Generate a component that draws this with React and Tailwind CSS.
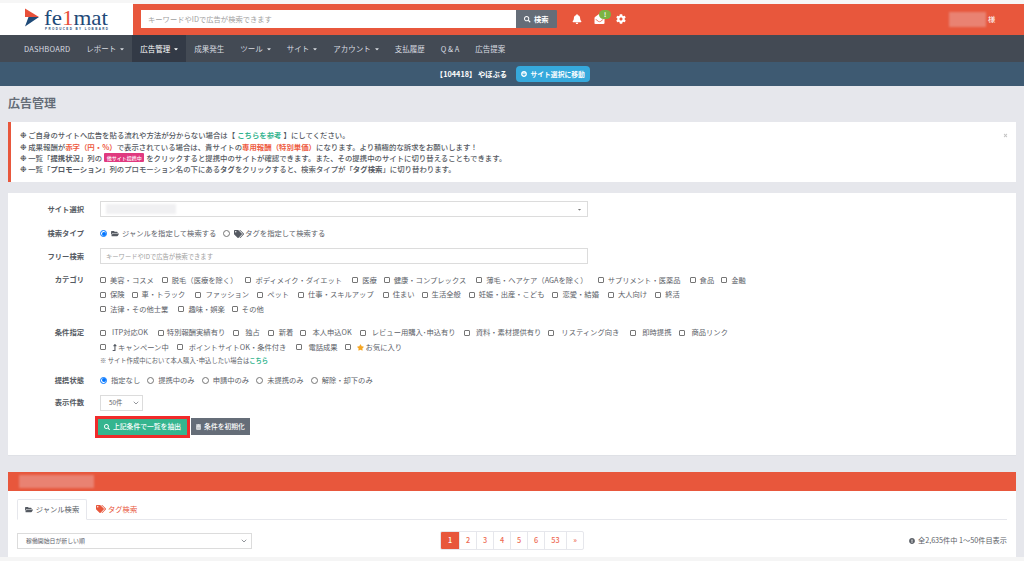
import { FaBell, FaEnvelopeOpen, FaCog, FaSearch, FaFolderOpen, FaTags, FaTrashAlt, FaStar, FaExclamationCircle, FaArrowCircleDown, FaCaretDown, FaTimes, FaLevelUpAlt } from "react-icons/fa";
import { LuChevronDown } from "react-icons/lu";

const JP = "font-['Noto_Sans_CJK_JP','Noto_Sans',sans-serif]";

const navItems = [
  { label: "DASHBOARD" },
  { label: "レポート", caret: true },
  { label: "広告管理", caret: true, active: true },
  { label: "成果発生" },
  { label: "ツール", caret: true },
  { label: "サイト", caret: true },
  { label: "アカウント", caret: true },
  { label: "支払履歴" },
  { label: "Q & A" },
  { label: "広告提案" },
];

const categoryRows = [
  [
    ["美容・コスメ", "mr-[8px]"],
    ["脱毛（医療を除く）", "mr-[8px]"],
    ["ボディメイク・ダイエット", "mr-[10px]"],
    ["医療", "mr-[7px]"],
    ["健康・コンプレックス", "mr-[10px]"],
    ["薄毛・ヘアケア（AGAを除く）", "mr-[10px]"],
    ["サプリメント・医薬品", "mr-[9px]"],
    ["食品", "mr-[7px]"],
    ["金融", "mr-0"],
  ],
  [
    ["保険", "mr-[7px]"],
    ["車・トラック", "mr-[10px]"],
    ["ファッション", "mr-[8px]"],
    ["ペット", "mr-[9px]"],
    ["仕事・スキルアップ", "mr-[9px]"],
    ["住まい", "mr-[7px]"],
    ["生活全般", "mr-[8px]"],
    ["妊娠・出産・こども", "mr-[8px]"],
    ["恋愛・結婚", "mr-[9px]"],
    ["大人向け", "mr-[8px]"],
    ["終活", "mr-0"],
  ],
  [
    ["法律・その他士業", "mr-[10px]"],
    ["趣味・娯楽", "mr-[7px]"],
    ["その他", "mr-0"],
  ],
];

const conditions = [
  ["ITP対応OK", "mr-[6px]", "mr-[10px]"],
  ["特別報酬実績有り", "mr-[3px]", "mr-[8px]"],
  ["独占", "mr-[6px]", "mr-[8px]"],
  ["新着", "mr-[5px]", "mr-[7px]"],
  ["本人申込OK", "mr-[6px]", "mr-[8px]"],
  ["レビュー用購入･申込有り", "mr-[6px]", "mr-[8px]"],
  ["資料・素材提供有り", "mr-[6px]", "mr-[7px]"],
  ["リスティング向き", "mr-[7px]", "mr-[11px]"],
  ["即時提携", "mr-[6px]", "mr-[8px]"],
  ["商品リンク", "mr-[6px]", "mr-0"],
];

function Check({ label, className = "mr-[7px]", gap = "mr-[4px]" }) {
  return (
    <label className={`flex h-[14.5px] items-center ${className}`}>
      <span className={`${gap} h-[6px] w-[6px] rounded-[1px] border border-[#767676] bg-white`} />
      <span>{label}</span>
    </label>
  );
}

function Radio({ label, checked, className = "mr-[7px]" }) {
  return (
    <label className={`flex items-center ${className}`}>
      {checked ? (
        <span className="mr-[4px] flex h-[7px] w-[7px] items-center justify-center rounded-full border border-[#0075ff] bg-white">
          <span className="h-[4px] w-[4px] rounded-full bg-[#0075ff]" />
        </span>
      ) : (
        <span className="mr-[4px] h-[7px] w-[7px] rounded-full border border-[#767676] bg-white" />
      )}
      {label}
    </label>
  );
}

function Row({ label, className = "", children }) {
  return (
    <div className={`flex ${className}`}>
      <div className="w-[76px] text-right font-bold text-[#555a62]">{label}</div>
      <div className="ml-[16px] w-[488px] shrink-0">{children}</div>
    </div>
  );
}

function Bullet() {
  return <span className="mr-[1.5px] translate-y-[1px] font-['DejaVu_Sans',sans-serif] text-[8px] font-bold text-[#3c4046]">❉</span>;
}

function Logo() {
  return (
    <div className="h-[32px] w-[133px] bg-white">
      <svg width="133" height="32" viewBox="0 0 133 32">
        <path d="M25 5.5 L39 14 L25 14 Z" fill="#e8503a" />
        <path d="M25 14 L39 14 L25 23.5 L28.5 14 Z" fill="#1f4a78" />
        <text x="44" y="22" fontFamily="Liberation Serif, serif" fontSize="22" fill="#1f4a78" textLength="64" lengthAdjust="spacingAndGlyphs">
          fe<tspan fill="#e8503a">1</tspan>mat
        </text>
        <text x="45" y="27" fontFamily="Liberation Sans, sans-serif" fontSize="3" fontWeight="700" fill="#1f4a78" textLength="63">PRODUCED BY LOBBARD</text>
      </svg>
    </div>
  );
}

export default function App() {
  return (
    <div className={`${JP} h-[561px] w-[1024px] overflow-hidden bg-[#e6e7ec] text-[7.3px] leading-[11px] text-[#5c6168]`}>
      <div className="h-[3.5px] bg-[#f6f6f6]" />
      {/* header */}
      <header className="flex h-[31.5px] items-center bg-[#e8573c]">
        <Logo />
        <div className="ml-[8px] flex h-[18px] w-[416px]">
          <div className="flex w-[375px] items-center bg-white pl-[7px] text-[#a0a0a0]">キーワードやIDで広告が検索できます</div>
          <div className="flex w-[41px] items-center justify-center rounded-r-[1px] bg-[#656d78] font-bold text-white">
            <FaSearch className="mr-[3px] h-[6.5px] w-[6.5px]" />検索
          </div>
        </div>
        <FaBell className="ml-[15px] h-[10px] w-[10px] text-white" />
        <div className="relative ml-[12px]">
          <FaEnvelopeOpen className="h-[10px] w-[11px] text-white" />
          <span className="absolute top-[-4px] left-[5px] flex h-[9px] w-[12px] items-center justify-center rounded-full bg-[#7cb342] text-[6px] leading-none font-bold text-white">!</span>
        </div>
        <FaCog className="ml-[11px] h-[10px] w-[10px] text-white" />
        <div className="ml-[323px] h-[15px] w-[37px] bg-[#e98272] blur-[1px]" />
        <span className="ml-[2px] text-white">様</span>
      </header>

      {/* nav */}
      <nav className="flex h-[27px] bg-[#434a54] pl-[16px] text-[7.5px] text-[#d8dbe0]">
        {navItems.map((n) => (
          <div key={n.label} className={`flex items-center px-[8px] ${n.active ? "bg-[#333a46] text-white" : ""} ${n.label === "DASHBOARD" ? "tracking-[0.2px]" : ""}`}>
            {n.label}
            {n.caret && <FaCaretDown className="ml-[4px] h-[6px] w-[4px]" />}
          </div>
        ))}
      </nav>

      {/* current site bar */}
      <div className="flex h-[24px] items-center justify-center bg-[#3e5a72] pl-[2px] font-bold text-white">
        <span>【104418】 やぼぶる</span>
        <span className="ml-[9px] flex h-[16px] w-[74px] items-center justify-center rounded-[4px] bg-[#36a9dc] text-[6.8px]">
          <FaArrowCircleDown className="mr-[3px] h-[6px] w-[6px]" />サイト選択に移動
        </span>
      </div>

      <main className="px-[8px]">
        <h1 className="mt-[8px] h-[17px] text-[12px] leading-[17px] font-bold text-[#656d78]">広告管理</h1>

        {/* notice */}
        <section className="relative mt-[11px] h-[60px] border-l-[3px] border-[#e8573c] bg-white pt-[7px] pl-[9px] text-[7.4px] font-medium text-[#555a62]">
          <p className="flex h-[11.4px] items-center"><Bullet />ご自身のサイトへ広告を貼る流れや方法が分からない場合は【 <b className="mx-[2px] text-[#35b58f]">こちらを参考</b> 】にしてください。</p>
          <p className="flex h-[11.4px] items-center"><Bullet />成果報酬が<b className="text-[#ee5a3f]">赤字（円・%）</b>で表示されている場合は、貴サイトの<b className="text-[#ee5a3f]">専用報酬（特別単価）</b>になります。より積極的な訴求をお願いします！</p>
          <p className="flex h-[11.4px] items-center"><Bullet />一覧「<b>提携状況</b>」列の<span className="mx-[2px] h-[9px] w-[40px] rounded-[1px] bg-[#e0397f] text-center text-[5px] leading-[9px] text-white">他サイト提携中</span>をクリックすると提携中のサイトが確認できます。また、その提携中のサイトに切り替えることもできます。</p>
          <p className="flex h-[11.4px] items-center"><Bullet />一覧「<b>プロモーション</b>」列のプロモーション名の下にある<b>タグ</b>をクリックすると、検索タイプが「<b>タグ検索</b>」に切り替わります。</p>
          <FaTimes className="absolute top-[11px] right-[8px] h-[5px] w-[5px] text-[#c4c4c4]" />
        </section>

        {/* search form */}
        <section className="mt-[11px] h-[263px] border-b border-[#dfe1e6] bg-white pt-[8px]">
          <Row label="サイト選択" className="items-center">
            <div className="flex h-[16px] items-center justify-between border border-[#dcdcdc] px-[5px]">
              <div className="h-[10px] w-[70px] bg-[#f0f0f2] blur-[1px]" />
              <FaCaretDown className="h-[5px] w-[5px] text-[#777]" />
            </div>
          </Row>
          <Row label="検索タイプ" className="mt-[11px] items-center">
            <div className="flex items-center">
              <Radio checked label={<><FaFolderOpen className="mr-[3px] h-[7px] w-[8px] text-[#555a62]" />ジャンルを指定して検索する</>} />
              <Radio label={<><FaTags className="mr-[1px] h-[8px] w-[10px] text-[#555a62]" />タグを指定して検索する</>} />
            </div>
          </Row>
          <Row label="フリー検索" className="mt-[9px] items-center">
            <div className="flex h-[16px] items-center border border-[#dcdcdc] pl-[5px] text-[6.3px] text-[#a0a0a0]">キーワードやIDで広告が検索できます</div>
          </Row>
          <div className="mt-[9px] flex">
            <div className="w-[76px] pt-[1px] text-right font-bold text-[#555a62]">カテゴリ</div>
            <div className="ml-[16px] w-[660px]">
              {categoryRows.map((row, i) => (
                <div key={i} className="flex">
                  {row.map(([c, m]) => <Check key={c} label={c} className={m} />)}
                </div>
              ))}
            </div>
          </div>
          <div className="mt-[9px] flex">
            <div className="w-[76px] pt-[1px] text-right font-bold text-[#555a62]">条件指定</div>
            <div className="ml-[16px] w-[660px]">
              <div className="flex">
                {conditions.map(([c, g, m]) => <Check key={c} label={c} gap={g} className={m} />)}
              </div>
              <div className="flex">
                <Check gap="mr-[6px]" className="mr-[8px]" label={<span className="flex items-center"><FaLevelUpAlt className="mr-[1px] h-[7px] w-[5px] text-[#555a62]" />キャンペーン中</span>} />
                <Check gap="mr-[6px]" className="mr-[10px]" label="ポイントサイトOK・条件付き" />
                <Check gap="mr-[6px]" className="mr-[7px]" label="電話成果" />
                <Check gap="mr-[6px]" label={<span className="flex items-center"><FaStar className="mr-[2px] h-[7px] w-[7px] text-[#f5a623]" />お気に入り</span>} />
              </div>
              <p className="text-[6.3px] leading-[12px]">※ サイト作成中において本人購入･申込したい場合は<b className="text-[#35b58f]">こちら</b></p>
            </div>
          </div>
          <Row label="提携状態" className="mt-[8px] items-center">
            <div className="flex">
              <Radio checked label="指定なし" />
              <Radio label="提携中のみ" />
              <Radio label="申請中のみ" />
              <Radio label="未提携のみ" />
              <Radio label="解除・却下のみ" />
            </div>
          </Row>
          <Row label="表示件数" className="mt-[9px] items-center">
            <div className="flex h-[16px] w-[43px] items-center justify-between border border-[#dcdcdc] pr-[2px] pl-[8px] text-[6.3px]">
              50件<LuChevronDown className="h-[8px] w-[8px]" />
            </div>
          </Row>
          <div className="mt-[5px] ml-[87px] flex items-center">
            <div className="border-[3px] border-[#f02b2b]">
              <div className="flex h-[16px] w-[89px] items-center justify-center bg-[#35b58f] text-[6.8px] font-medium text-white">
                <FaSearch className="mr-[3px] h-[6px] w-[6px]" />上記条件で一覧を抽出
              </div>
            </div>
            <div className="ml-[1px] flex h-[17px] w-[59px] items-center justify-center bg-[#656d78] text-[6.8px] font-medium text-white">
              <FaTrashAlt className="mr-[3px] h-[6px] w-[5px]" />条件を初期化
            </div>
          </div>
        </section>

        {/* results */}
        <section className="mt-[16px] h-[85px] bg-white">
          <div className="flex h-[19px] items-center bg-[#e8573c] pl-[11px]">
            <div className="h-[13px] w-[75px] bg-[#e98272] blur-[1px]" />
          </div>
          <div className="mx-[9px] mt-[8px] flex h-[21px] border-b border-[#e6e7ec]">
            <div className="flex h-[21px] w-[70px] items-center justify-center rounded-t-[2px] border border-[#e6e7ec] border-b-white bg-white text-[#555a62]">
              <FaFolderOpen className="mr-[3px] h-[7px] w-[8px]" />ジャンル検索
            </div>
            <div className="ml-[9px] flex items-center text-[#e8573c]">
              <FaTags className="mr-[2px] h-[8px] w-[10px]" />タグ検索
            </div>
          </div>
          <div className="mx-[9px] mt-[11px] flex items-center">
            <div className="flex h-[16px] w-[235px] items-center justify-between border border-[#dcdcdc] pr-[3px] pl-[8px] text-[5.9px]">
              稼働開始日が新しい順<LuChevronDown className="h-[8px] w-[8px]" />
            </div>
            <div className="ml-[188px] flex h-[19px] overflow-hidden rounded-[2px] border border-[#e6e7ec] font-medium text-[#ee6a52]">
              <span className="flex w-[18px] items-center justify-center bg-[#e8573c] text-white">1</span>
              {["2", "3", "4", "5", "6"].map((p) => (
                <span key={p} className="flex w-[17px] items-center justify-center border-l border-[#e6e7ec]">{p}</span>
              ))}
              <span className="flex w-[22px] items-center justify-center border-l border-[#e6e7ec]">53</span>
              <span className="flex w-[17px] items-center justify-center border-l border-[#e6e7ec]">»</span>
            </div>
            <div className="ml-auto flex items-center text-[7.2px]">
              <FaExclamationCircle className="mr-[3px] h-[6px] w-[6px]" />全2,635件中 1〜50件目表示
            </div>
          </div>
        </section>
      </main>
      <div className="h-[4px] bg-[#f5f5f5]" />
    </div>
  );
}
